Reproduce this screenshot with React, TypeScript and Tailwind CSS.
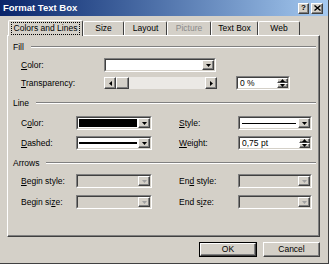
import React from "react";

const raised =
  "border border-t-white border-l-white border-r-[#404040] border-b-[#404040] shadow-[inset_-1px_-1px_0_#808080]";

const Tri = ({ dir, color = "#000" }: { dir: "down" | "up" | "left" | "right"; color?: string }) => {
  const d = {
    down: "M0 0h5L2.5 3z",
    up: "M0 3h5L2.5 0z",
    left: "M3 0v5L0 2.5z",
    right: "M0 0v5L3 2.5z",
  }[dir];
  const vertical = dir === "down" || dir === "up";
  return (
    <svg width={vertical ? 5 : 3} height={vertical ? 3 : 5} viewBox={vertical ? "0 0 5 3" : "0 0 3 5"}>
      <path d={d} fill={color} />
    </svg>
  );
};

const Sunken = ({ w, children }: { w: string; children: React.ReactNode }) => (
  <div className={`h-[14px] ${w} border border-[#808080] border-r-white border-b-white`}>
    <div className="h-full w-full flex border border-[#404040] border-r-[#d4d0c8] border-b-[#d4d0c8]">
      {children}
    </div>
  </div>
);

const Combo = ({
  w,
  disabled,
  children,
}: {
  w: string;
  disabled?: boolean;
  children?: React.ReactNode;
}) => (
  <Sunken w={w}>
    <div className={`flex-1 flex items-center ${disabled ? "bg-[#d4d0c8]" : "bg-white"}`}>{children}</div>
    <div className={`w-[12px] h-full bg-[#d4d0c8] flex items-center justify-center ${raised}`}>
      <Tri dir="down" color={disabled ? "#a0a0a0" : "#000"} />
    </div>
  </Sunken>
);

const Spinner = ({ w, value }: { w: string; value: string }) => (
  <Sunken w={w}>
    <div className="flex-1 bg-white flex items-center pl-[2px] leading-none">{value}</div>
    <div className="w-[11px] h-full flex flex-col">
      <div className={`flex-1 bg-[#d4d0c8] flex items-center justify-center ${raised}`}>
        <Tri dir="up" />
      </div>
      <div className={`flex-1 bg-[#d4d0c8] flex items-center justify-center ${raised}`}>
        <Tri dir="down" />
      </div>
    </div>
  </Sunken>
);

const Header = ({ label, mt }: { label: string; mt: string }) => (
  <div className={`flex items-center h-[12px] pl-[5px] pr-[3px] ${mt}`}>
    <span>{label}</span>
    <div className="flex-1 ml-[7px] h-[2px] border-t border-t-[#808080] border-b border-b-white" />
  </div>
);

const Label = ({ w, pre, u, post }: { w: string; pre?: string; u: string; post: string }) => (
  <span className={w}>
    {pre}
    <span className="underline underline-offset-1">{u}</span>
    {post}
  </span>
);

const tabs = [
  { label: "Size", w: "w-[41px]" },
  { label: "Layout", w: "w-[43px]" },
  { label: "Picture", w: "w-[44px]", disabled: true },
  { label: "Text Box", w: "w-[47px]" },
  { label: "Web", w: "w-[42px]" },
];

export default function App() {
  return (
    <div className="w-[329px] h-[264px] bg-[#d4d0c8] flex flex-col border-r border-b border-[#404040] text-[8.5px] text-black font-['Liberation_Sans',Arial,sans-serif] leading-none overflow-hidden">
      {/* title bar */}
      <div className="h-[16px] shrink-0 flex items-center pl-[3px] pr-[5px] bg-gradient-to-r from-[#0a246a] to-[#a6caf0]">
        <span className="text-white font-bold text-[9.5px] flex-1">Format Text Box</span>
        <div className={`w-[11px] h-[11px] bg-[#d4d0c8] flex items-center justify-center font-bold text-[8px] ${raised}`}>?</div>
        <div className={`w-[12px] h-[11px] ml-[2px] bg-[#d4d0c8] flex items-center justify-center ${raised}`}>
          <svg width="7" height="6" viewBox="0 0 7 6">
            <path d="M0.5 0.5l6 5M6.5 0.5l-6 5" stroke="#000" strokeWidth="1.4" />
          </svg>
        </div>
      </div>

      {/* tabs */}
      <div className="h-[16px] mt-[4px] ml-[8px] flex items-end shrink-0">
        <div className="relative z-10 w-[75px] h-[16px] bg-[#d4d0c8] flex items-center justify-center border-t border-l border-white border-r border-r-[#404040] rounded-t-[2px]">
          <span className="border border-dotted border-black px-[2px] py-[1px]">Colors and Lines</span>
        </div>
        {tabs.map((t) => (
          <div
            key={t.label}
            className={`${t.w} h-[14px] mb-px flex items-center justify-center border-t border-l border-white border-r border-r-[#404040] rounded-t-[2px] ${t.disabled ? "text-[#8a8a8a]" : ""}`}
          >
            {t.label}
          </div>
        ))}
      </div>

      {/* panel */}
      <div className="relative -mt-px ml-[7px] w-[313px] h-[202px] shrink-0 border border-t-white border-l-white border-r-[#404040] border-b-[#404040] shadow-[inset_-1px_-1px_0_#808080] flex flex-col">
        <Header label="Fill" mt="mt-[5px]" />
        <div className="flex items-center h-[14px] mt-[5px] pl-[13px]">
          <Label w="w-[83px]" u="C" post="olor:" />
          <Combo w="w-[112px]" />
        </div>
        <div className="flex items-center h-[14px] mt-[4px] pl-[13px]">
          <Label w="w-[83px]" u="T" post="ransparency:" />
          <div className="w-[113px] h-[12px] flex">
            <div className={`w-[12px] h-full bg-[#d4d0c8] flex items-center justify-center ${raised}`}>
              <Tri dir="left" />
            </div>
            <div className={`w-[13px] h-full bg-[#d4d0c8] ${raised}`} />
            <div className="flex-1 bg-[#ebe9e5]" />
            <div className={`w-[12px] h-full bg-[#d4d0c8] flex items-center justify-center ${raised}`}>
              <Tri dir="right" />
            </div>
          </div>
          <div className="ml-[19px]">
            <Spinner w="w-[54px]" value="0 %" />
          </div>
        </div>

        <Header label="Line" mt="mt-[7px]" />
        <div className="flex items-center h-[14px] mt-[7px] pl-[13px]">
          <Label w="w-[55px]" pre="C" u="o" post="lor:" />
          <Combo w="w-[76px]">
            <div className="w-full h-full p-px bg-white">
              <div className="w-full h-full bg-black" />
            </div>
          </Combo>
          <Label w="w-[59px] ml-[27px]" u="S" post="tyle:" />
          <Combo w="w-[74px]">
            <div className="w-full px-[2px]">
              <div className="h-px bg-black" />
            </div>
          </Combo>
        </div>
        <div className="flex items-center h-[14px] mt-[6px] pl-[13px]">
          <Label w="w-[55px]" u="D" post="ashed:" />
          <Combo w="w-[76px]">
            <div className="w-full px-[1px]">
              <div className="h-[2px] bg-black" />
            </div>
          </Combo>
          <Label w="w-[59px] ml-[27px]" u="W" post="eight:" />
          <Spinner w="w-[74px]" value="0,75 pt" />
        </div>

        <Header label="Arrows" mt="mt-[7px]" />
        <div className="flex items-center h-[14px] mt-[5px] pl-[13px]">
          <Label w="w-[55px]" u="B" post="egin style:" />
          <Combo w="w-[76px]" disabled />
          <Label w="w-[59px] ml-[27px]" pre="En" u="d" post=" style:" />
          <Combo w="w-[74px]" disabled />
        </div>
        <div className="flex items-center h-[14px] mt-[7px] pl-[13px]">
          <Label w="w-[55px]" pre="Begin si" u="z" post="e:" />
          <Combo w="w-[76px]" disabled />
          <Label w="w-[59px] ml-[27px]" pre="End s" u="i" post="ze:" />
          <Combo w="w-[74px]" disabled />
        </div>
      </div>

      {/* buttons */}
      <div className="flex justify-end gap-[6px] mt-[5px] mr-[8px]">
        <div className="w-[58px] h-[15px] border border-black">
          <div className={`w-full h-full flex items-center justify-center bg-[#d4d0c8] ${raised}`}>OK</div>
        </div>
        <div className={`w-[57px] h-[15px] flex items-center justify-center bg-[#d4d0c8] ${raised}`}>Cancel</div>
      </div>
    </div>
  );
}
